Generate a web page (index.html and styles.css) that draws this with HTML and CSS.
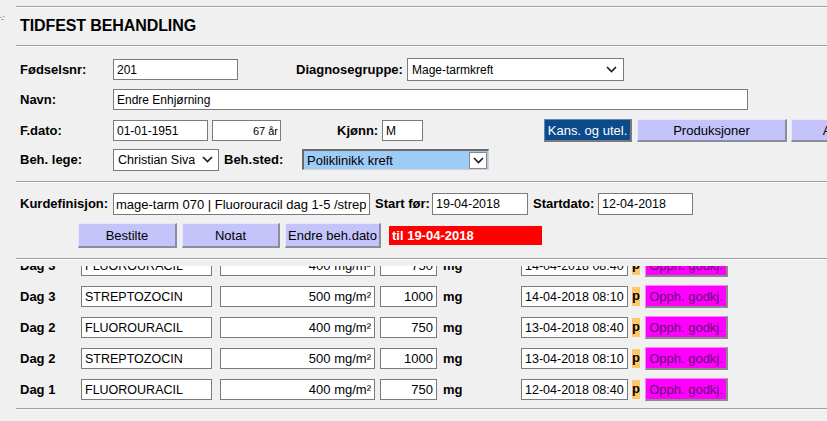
FILE: index.html
```html
<!DOCTYPE html>
<html lang="no">
<head>
<meta charset="utf-8">
<title>Tidfest behandling</title>
<link rel="stylesheet" href="styles.css">
</head>
<body>
<div class="page">
  <div class="gutter">
    <svg class="mark" width="6" height="5" viewBox="0 0 6 5"><path d="M0 1h2v1H0zM3 0h2v1H3zM1 3h3v1H1z" fill="#b0b0b0"/></svg>
  </div>
  <main class="main">
    <hr class="rule rule-top">
    <h1 class="title">TIDFEST BEHANDLING</h1>
    <hr class="rule">

    <section class="patient">
      <div class="row">
        <span class="lbl lbl-main">Fødselsnr:</span>
        <input class="inp w-fnr" value="201" readonly>
        <span class="lbl lbl-diag">Diagnosegruppe:</span>
        <div class="sel w-diag">
          <span class="sel-text">Mage-tarmkreft</span>
          <svg class="chev" width="11" height="7" viewBox="0 0 11 7"><path d="M1 1l4.5 4.5L10 1" fill="none" stroke="#1a1a1a" stroke-width="1.6"/></svg>
        </div>
      </div>
      <div class="row">
        <span class="lbl lbl-main">Navn:</span>
        <input class="inp w-navn" value="Endre Enhjørning" readonly>
      </div>
      <div class="row row-fdato">
        <span class="lbl lbl-main">F.dato:</span>
        <input class="inp w-fdato" value="01-01-1951" readonly>
        <input class="inp inp-age w-age" value="67 år" readonly>
        <span class="lbl lbl-kjonn">Kjønn:</span>
        <input class="inp w-kjonn" value="M" readonly>
        <button class="btn btn-dark w-kans">Kans. og utel.</button>
        <button class="btn btn-lav w-prod">Produksjoner</button>
        <button class="btn btn-lav w-adm">Administrasjon</button>
      </div>
      <div class="row row-lege">
        <span class="lbl lbl-main">Beh. lege:</span>
        <div class="sel w-lege">
          <span class="sel-text">Christian Siva</span>
          <svg class="chev" width="11" height="7" viewBox="0 0 11 7"><path d="M1 1l4.5 4.5L10 1" fill="none" stroke="#1a1a1a" stroke-width="1.6"/></svg>
        </div>
        <span class="lbl lbl-sted">Beh.sted:</span>
        <div class="sel sel-blue w-sted">
          <span class="sel-text">Poliklinikk kreft</span>
          <span class="sel-btn"><svg width="11" height="7" viewBox="0 0 11 7"><path d="M1 1l4.5 4.5L10 1" fill="none" stroke="#1a1a1a" stroke-width="1.6"/></svg></span>
        </div>
      </div>
    </section>

    <hr class="rule rule-gap">

    <section class="cure">
      <div class="row row-kur">
        <span class="lbl lbl-main">Kurdefinisjon:</span>
        <input class="inp w-kur" value="mage-tarm 070 | Fluorouracil dag 1-5 /streptozocin dag 1-5" readonly>
        <span class="lbl lbl-start">Start før:</span>
        <input class="inp w-startfor" value="19-04-2018" readonly>
        <span class="lbl lbl-startdato">Startdato:</span>
        <input class="inp w-startdato" value="12-04-2018" readonly>
      </div>
      <div class="row row-actions">
        <button class="btn btn-lav w-best">Bestilte</button>
        <button class="btn btn-lav w-notat">Notat</button>
        <button class="btn btn-lav w-endre">Endre beh.dato</button>
        <span class="status">til 19-04-2018</span>
      </div>
    </section>

    <hr class="rule rule-gap">

    <div class="list-viewport">
      <div class="list">
        <div class="drow">
          <span class="lbl day">Dag 3</span>
          <input class="inp tinp w-med" value="FLUOROURACIL" readonly>
          <input class="inp tinp num w-dose" value="400 mg/m²" readonly>
          <input class="inp tinp num w-amt" value="750" readonly>
          <span class="lbl unit">mg</span>
          <input class="inp tinp w-time" value="14-04-2018 08:40" readonly>
          <span class="pflag">p</span>
          <button class="btn btn-mag">Opph. godkj.</button>
        </div>
        <div class="drow">
          <span class="lbl day">Dag 3</span>
          <input class="inp tinp w-med" value="STREPTOZOCIN" readonly>
          <input class="inp tinp num w-dose" value="500 mg/m²" readonly>
          <input class="inp tinp num w-amt" value="1000" readonly>
          <span class="lbl unit">mg</span>
          <input class="inp tinp w-time" value="14-04-2018 08:10" readonly>
          <span class="pflag">p</span>
          <button class="btn btn-mag">Opph. godkj.</button>
        </div>
        <div class="drow">
          <span class="lbl day">Dag 2</span>
          <input class="inp tinp w-med" value="FLUOROURACIL" readonly>
          <input class="inp tinp num w-dose" value="400 mg/m²" readonly>
          <input class="inp tinp num w-amt" value="750" readonly>
          <span class="lbl unit">mg</span>
          <input class="inp tinp w-time" value="13-04-2018 08:40" readonly>
          <span class="pflag">p</span>
          <button class="btn btn-mag">Opph. godkj.</button>
        </div>
        <div class="drow">
          <span class="lbl day">Dag 2</span>
          <input class="inp tinp w-med" value="STREPTOZOCIN" readonly>
          <input class="inp tinp num w-dose" value="500 mg/m²" readonly>
          <input class="inp tinp num w-amt" value="1000" readonly>
          <span class="lbl unit">mg</span>
          <input class="inp tinp w-time" value="13-04-2018 08:10" readonly>
          <span class="pflag">p</span>
          <button class="btn btn-mag">Opph. godkj.</button>
        </div>
        <div class="drow">
          <span class="lbl day">Dag 1</span>
          <input class="inp tinp w-med" value="FLUOROURACIL" readonly>
          <input class="inp tinp num w-dose" value="400 mg/m²" readonly>
          <input class="inp tinp num w-amt" value="750" readonly>
          <span class="lbl unit">mg</span>
          <input class="inp tinp w-time" value="12-04-2018 08:40" readonly>
          <span class="pflag">p</span>
          <button class="btn btn-mag">Opph. godkj.</button>
        </div>
      </div>
    </div>

    <hr class="rule rule-bottom">
  </main>
</div>
</body>
</html>
```

FILE: styles.css
```css
* { box-sizing: border-box; }

html, body {
  margin: 0;
  background: #f0f0f0;
  font-family: "Liberation Sans", Arial, sans-serif;
  color: #000;
  overflow: hidden;
}

.page {
  display: flex;
  width: 827px;
  height: 421px;
  overflow: hidden;
}

.gutter {
  flex: none;
  width: 16px;
  padding-top: 16px;
}
.mark { display: block; }

.main {
  flex: 1;
  min-width: 0;
  overflow: hidden;
}

.rule {
  margin: 0;
  height: 0;
  border: 0;
  border-top: 1px solid #a0a0a0;
  border-bottom: 1px solid #fafafa;
}
.rule-top { margin-top: 6px; }
.rule-gap { margin-top: 10px; }
.rule-bottom { margin-top: 3px; }

.title {
  margin: 0;
  height: 37px;
  padding: 9px 4px 0;
  font-size: 16px;
  line-height: 18px;
  font-weight: bold;
  letter-spacing: -0.1px;
}

/* ---------- form rows ---------- */
.patient {
  padding: 11px 0 0 4px;
  display: flex;
  flex-direction: column;
  gap: 7px;
}
.patient .row-fdato { margin-top: 1px; }
.patient .row-lege { margin-top: -1px; }

.cure {
  padding: 10px 0 0 4px;
  display: flex;
  flex-direction: column;
  gap: 8px;
}

.row {
  display: flex;
  align-items: center;
  height: 23px;
  white-space: nowrap;
}
.row-kur { height: 22px; }
.row-actions { height: 25px; padding-left: 58px; }

.lbl {
  flex: none;
  font-size: 13px;
  font-weight: bold;
  line-height: 16px;
}
.lbl-main { width: 93px; }
.lbl-diag { width: 111px; margin-left: 58px; }
.lbl-kjonn { width: 45px; margin-left: 56px; }
.lbl-sted { width: 78px; margin-left: 5px; }
.lbl-start { width: 57px; margin-left: 5px; }
.lbl-startdato { width: 65px; margin-left: 5px; }

.inp {
  flex: none;
  height: 21px;
  margin: 0;
  padding: 0 3px;
  border: 1px solid #7a7a7a;
  border-radius: 0;
  background: #fff;
  font-family: "Liberation Sans", Arial, sans-serif;
  font-size: 12px;
  color: #000;
  outline: none;
}
.inp-age { margin-left: 4px; text-align: right; font-size: 11px; padding-right: 2px; }

.w-fnr { width: 125px; }
.w-navn { width: 635px; }
.w-fdato { width: 95px; }
.w-age { width: 69px; }
.w-kjonn { width: 41px; }
.w-kur { width: 257px; height: 22px; font-size: 13px; padding-left: 2px; }
.w-startfor { width: 96px; height: 22px; font-size: 12.5px; }
.w-startdato { width: 95px; height: 22px; font-size: 12.5px; }

/* ---------- selects ---------- */
.sel {
  flex: none;
  display: flex;
  align-items: center;
  justify-content: space-between;
  height: 23px;
  padding: 0 4px 0 4px;
  border: 1px solid #7a7a7a;
  background: #fff;
  font-size: 12px;
}
.sel-text { overflow: hidden; }
.chev { flex: none; display: block; }
.w-diag { width: 217px; padding-right: 6px; }
.w-lege { width: 106px; height: 22px; padding-right: 5px; font-size: 12.5px; }

.sel-blue {
  width: 187px;
  height: 21px;
  padding: 0 1px 0 3px;
  background: #9fcbf7;
  border-style: solid;
  border-width: 2px 1px 1px 2px;
  border-color: #6a6a6a #d0d0d0 #d0d0d0 #6a6a6a;
  font-size: 13px;
}
.sel-btn {
  flex: none;
  display: flex;
  align-items: center;
  justify-content: center;
  width: 18px;
  height: 17px;
  background: #fff;
  border: 1px solid #8a8a8a;
}

/* ---------- buttons ---------- */
.btn {
  flex: none;
  margin: 0;
  padding: 0;
  height: 23px;
  font-family: "Liberation Sans", Arial, sans-serif;
  font-size: 13px;
  color: #000;
  border-style: solid;
  border-width: 1px 2px 2px 1px;
  border-radius: 0;
  cursor: default;
  text-align: center;
  white-space: nowrap;
}
.btn-lav {
  background: #c4c4fb;
  border-color: #e6e6ff #8c8c9c #8c8c9c #e6e6ff;
}
.btn-dark {
  background: #0b4a8b;
  color: #fff;
  border-color: #5f86b3 #7a7a7a #7a7a7a #5f86b3;
}
.w-kans { width: 88px; margin-left: 121px; }
.w-prod { width: 150px; margin-left: 5px; }
.w-adm { width: 150px; margin-left: 4px; }

.row-actions .btn { height: 25px; }
.w-best { width: 99px; }
.w-notat { width: 98px; margin-left: 5px; }
.w-endre { width: 96px; margin-left: 5px; }

.status {
  flex: none;
  width: 153px;
  height: 19px;
  margin-left: 8px;
  padding-left: 3px;
  background: #ff0000;
  color: #fff;
  font-size: 13px;
  font-weight: bold;
  line-height: 19px;
}

/* ---------- treatment list ---------- */
.list-viewport {
  margin-top: 6px;
  height: 139px;
  overflow: hidden;
  padding-left: 4px;
}
.list { margin-top: -16px; }

.drow {
  display: flex;
  align-items: center;
  height: 31px;
  white-space: nowrap;
}
.day { width: 61px; }
.tinp { height: 21px; font-size: 12.5px; }
.num { text-align: right; padding-right: 3px; font-size: 13px; }
.w-med { width: 131px; }
.w-dose { width: 155px; margin-left: 8px; }
.w-amt { width: 57px; margin-left: 5px; }
.unit { width: 78px; margin-left: 6px; }
.w-time { width: 107px; }

.pflag {
  flex: none;
  width: 8px;
  height: 19px;
  margin-left: 4px;
  background: #fcc86b;
  font-size: 13px;
  font-weight: bold;
  line-height: 17px;
  text-align: center;
}

.btn-mag {
  width: 83px;
  margin-left: 5px;
  background: #ff00ff;
  color: #5e0f70;
  border-color: #ff7fff #8a8a8a #8a8a8a #ff7fff;
}
```
